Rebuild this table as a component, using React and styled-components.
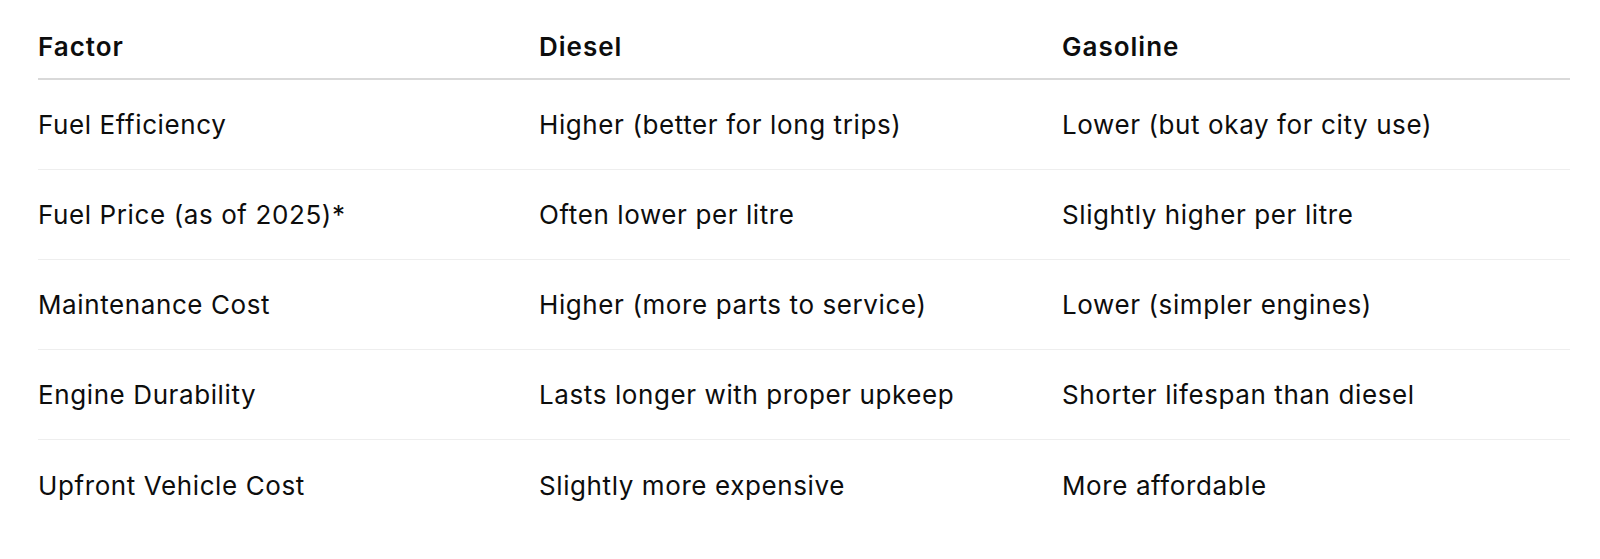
import React from "react";
import styled, { createGlobalStyle } from "styled-components";

const Global = createGlobalStyle`
  html, body { margin: 0; padding: 0; background: #ffffff; }
  body { font-family: Inter, "Noto Sans", sans-serif; color: #0d0d0d; -webkit-font-smoothing: antialiased; }
`;

const Page = styled.div`
  padding: 0 30px 0 38px;
`;

const Table = styled.div`
  display: grid;
  grid-template-columns: 501px 523px 1fr;
  width: 1532px;
`;

const HeadCell = styled.div`
  height: 80px;
  padding-top: 15px;
  box-sizing: border-box;
  display: flex;
  align-items: center;
  font-size: 26px;
  letter-spacing: 1px;
  font-weight: 600;
  color: #0d0d0d;
  border-bottom: 2px solid #d9d9d9;
`;

const Cell = styled.div`
  height: 90px;
  box-sizing: border-box;
  display: flex;
  align-items: center;
  font-size: 26px;
  letter-spacing: 0.6px;
  font-weight: 400;
  color: #0d0d0d;
  border-bottom: ${(p) => (p.$last ? "none" : "1px solid #eeeeee")};
`;

const headers = ["Factor", "Diesel", "Gasoline"];
const rows = [
  ["Fuel Efficiency", "Higher (better for long trips)", "Lower (but okay for city use)"],
  ["Fuel Price (as of 2025)*", "Often lower per litre", "Slightly higher per litre"],
  ["Maintenance Cost", "Higher (more parts to service)", "Lower (simpler engines)"],
  ["Engine Durability", "Lasts longer with proper upkeep", "Shorter lifespan than diesel"],
  ["Upfront Vehicle Cost", "Slightly more expensive", "More affordable"],
];

export default function App() {
  return (
    <Page>
      <Global />
      <Table>
        {headers.map((h) => (
          <HeadCell key={h}>{h}</HeadCell>
        ))}
        {rows.map((r, i) =>
          r.map((c, j) => (
            <Cell key={`${i}-${j}`} $last={i === rows.length - 1}>
              {c}
            </Cell>
          ))
        )}
      </Table>
    </Page>
  );
}
